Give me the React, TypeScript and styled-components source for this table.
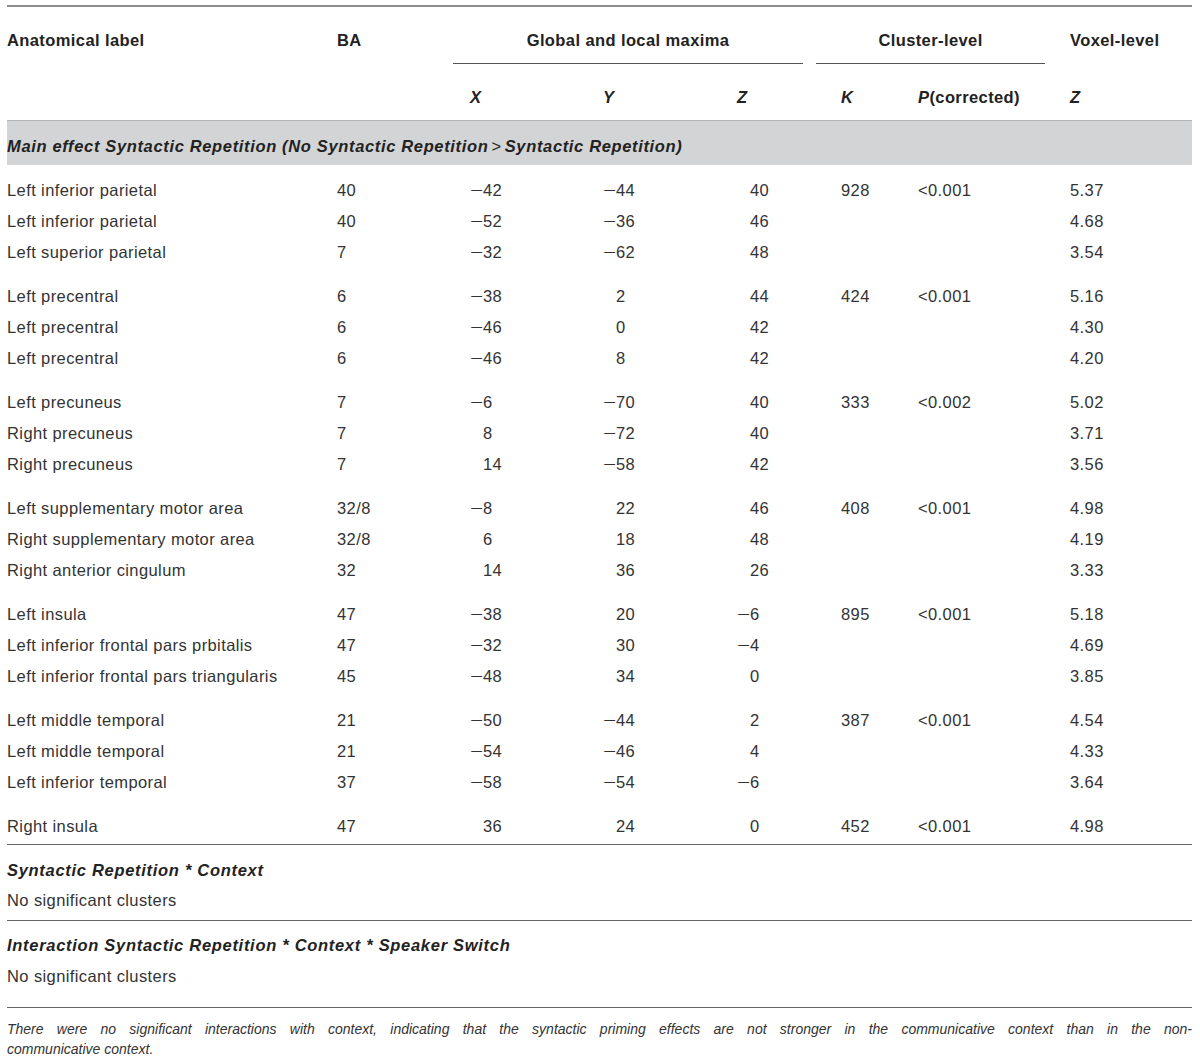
import React from "react";
import styled, { createGlobalStyle } from "styled-components";

const GlobalStyle = createGlobalStyle`
  html, body {
    margin: 0;
    padding: 0;
    background: #ffffff;
  }
  body {
    font-family: "Liberation Sans", Arial, sans-serif;
    color: #333;
  }
`;

const Page = styled.div`
  width: 1185px;
  padding: 5px 8px 0 7px;
  font-size: 16.5px;
  letter-spacing: 0.4px;
`;

const Table = styled.table`
  width: 1185px;
  table-layout: fixed;
  border-collapse: collapse;
  border-top: 2px solid #8c8c8c;
  border-bottom: 1px solid #666;
`;

const HeadCell = styled.th`
  text-align: left;
  vertical-align: top;
  font-weight: 700;
  color: #222;
  line-height: 20px;
  padding: 22.5px 0 0;
`;

const SpanHead = styled.div<{ $left: number; $right: number }>`
  text-align: center;
  border-bottom: 1px solid #555;
  padding-bottom: 13px;
  margin-left: ${(p) => p.$left}px;
  margin-right: ${(p) => p.$right}px;
`;

const SubHeadCell = styled.th`
  text-align: left;
  font-weight: 700;
  font-style: italic;
  color: #222;
  line-height: 20px;
  padding: 23px 0 13.5px;
`;

const Plain = styled.span`
  font-style: normal;
`;

const BandCell = styled.td`
  background: #d3d4d6;
  border-top: 1px solid #b4b4b4;
  font-weight: 700;
  font-style: italic;
  letter-spacing: 0.65px;
  color: #222;
  line-height: 20px;
  padding: 15px 0 9px;
`;

const Gt = styled.span`
  font-weight: 400;
  font-style: normal;
  margin: 0 3px;
`;

const Cell = styled.td<{ $top: number; $bottom: number }>`
  line-height: 20px;
  padding: ${(p) => p.$top}px 0 ${(p) => p.$bottom}px;
  white-space: nowrap;
`;

const Sign = styled.span`
  display: inline-block;
  width: 13px;
`;

const Minus = styled.span`
  display: inline-block;
  transform: scaleX(1.35);
  transform-origin: left center;
`;

const SectionTitle = styled.td`
  border-top: 1px solid #666;
  font-weight: 700;
  font-style: italic;
  letter-spacing: 0.7px;
  color: #222;
  line-height: 20px;
  padding: 14.5px 0 5.5px;
`;

const SectionText = styled.td<{ $bottom: number }>`
  line-height: 20px;
  padding: 5px 0 ${(p) => p.$bottom}px;
`;

const Footnote = styled.div`
  margin: 11.5px 0 0;
  font-size: 14px;
  letter-spacing: 0;
  line-height: 20px;
  font-style: italic;
  color: #333;
`;

const FullLine = styled.span`
  display: block;
  text-align: justify;
  text-align-last: justify;
`;

type Row = [string, string, number, number, number, string, string, string];

const groups: Row[][] = [
  [
    ["Left inferior parietal", "40", -42, -44, 40, "928", "<0.001", "5.37"],
    ["Left inferior parietal", "40", -52, -36, 46, "", "", "4.68"],
    ["Left superior parietal", "7", -32, -62, 48, "", "", "3.54"],
  ],
  [
    ["Left precentral", "6", -38, 2, 44, "424", "<0.001", "5.16"],
    ["Left precentral", "6", -46, 0, 42, "", "", "4.30"],
    ["Left precentral", "6", -46, 8, 42, "", "", "4.20"],
  ],
  [
    ["Left precuneus", "7", -6, -70, 40, "333", "<0.002", "5.02"],
    ["Right precuneus", "7", 8, -72, 40, "", "", "3.71"],
    ["Right precuneus", "7", 14, -58, 42, "", "", "3.56"],
  ],
  [
    ["Left supplementary motor area", "32/8", -8, 22, 46, "408", "<0.001", "4.98"],
    ["Right supplementary motor area", "32/8", 6, 18, 48, "", "", "4.19"],
    ["Right anterior cingulum", "32", 14, 36, 26, "", "", "3.33"],
  ],
  [
    ["Left insula", "47", -38, 20, -6, "895", "<0.001", "5.18"],
    ["Left inferior frontal pars prbitalis", "47", -32, 30, -4, "", "", "4.69"],
    ["Left inferior frontal pars triangularis", "45", -48, 34, 0, "", "", "3.85"],
  ],
  [
    ["Left middle temporal", "21", -50, -44, 2, "387", "<0.001", "4.54"],
    ["Left middle temporal", "21", -54, -46, 4, "", "", "4.33"],
    ["Left inferior temporal", "37", -58, -54, -6, "", "", "3.64"],
  ],
  [["Right insula", "47", 36, 24, 0, "452", "<0.001", "4.98"]],
];

const widths = [330, 133, 133, 134, 104, 77, 152, 122];

function Coord({ v }: { v: number }) {
  return (
    <>
      <Sign>{v < 0 ? <Minus>{"\u2212"}</Minus> : null}</Sign>
      {Math.abs(v)}
    </>
  );
}

export default function App() {
  return (
    <Page>
      <GlobalStyle />
      <Table>
        <colgroup>
          {widths.map((w, i) => (
            <col key={i} style={{ width: w }} />
          ))}
        </colgroup>
        <thead>
          <tr>
            <HeadCell>Anatomical label</HeadCell>
            <HeadCell>BA</HeadCell>
            <HeadCell colSpan={3}>
              <SpanHead $left={-17} $right={38}>Global and local maxima</SpanHead>
            </HeadCell>
            <HeadCell colSpan={2}>
              <SpanHead $left={-25} $right={25}>Cluster-level</SpanHead>
            </HeadCell>
            <HeadCell>Voxel-level</HeadCell>
          </tr>
          <tr>
            <SubHeadCell />
            <SubHeadCell />
            <SubHeadCell>X</SubHeadCell>
            <SubHeadCell>Y</SubHeadCell>
            <SubHeadCell>Z</SubHeadCell>
            <SubHeadCell>K</SubHeadCell>
            <SubHeadCell>
              P<Plain>(corrected)</Plain>
            </SubHeadCell>
            <SubHeadCell>Z</SubHeadCell>
          </tr>
        </thead>
        <tbody>
          <tr>
            <BandCell colSpan={8}>
              Main effect Syntactic Repetition (No Syntactic Repetition
              <Gt>&gt;</Gt>Syntactic Repetition)
            </BandCell>
          </tr>
          {groups.map((g, gi) =>
            g.map((r, ri) => {
              const top = ri > 0 ? 5.5 : gi === 0 ? 15 : 18.5;
              const bottom = gi === groups.length - 1 ? 8 : 5.5;
              return (
                <tr key={`${gi}-${ri}`}>
                  <Cell $top={top} $bottom={bottom}>{r[0]}</Cell>
                  <Cell $top={top} $bottom={bottom}>{r[1]}</Cell>
                  <Cell $top={top} $bottom={bottom}><Coord v={r[2]} /></Cell>
                  <Cell $top={top} $bottom={bottom}><Coord v={r[3]} /></Cell>
                  <Cell $top={top} $bottom={bottom}><Coord v={r[4]} /></Cell>
                  <Cell $top={top} $bottom={bottom}>{r[5]}</Cell>
                  <Cell $top={top} $bottom={bottom}>{r[6]}</Cell>
                  <Cell $top={top} $bottom={bottom}>{r[7]}</Cell>
                </tr>
              );
            })
          )}
          <tr>
            <SectionTitle colSpan={8}>Syntactic Repetition * Context</SectionTitle>
          </tr>
          <tr>
            <SectionText colSpan={8} $bottom={9.5}>No significant clusters</SectionText>
          </tr>
          <tr>
            <SectionTitle colSpan={8}>
              Interaction Syntactic Repetition * Context * Speaker Switch
            </SectionTitle>
          </tr>
          <tr>
            <SectionText colSpan={8} $bottom={21}>No significant clusters</SectionText>
          </tr>
        </tbody>
      </Table>
      <Footnote>
        <FullLine>
          There were no significant interactions with context, indicating that
          the syntactic priming effects are not stronger in the communicative
          context than in the non-
        </FullLine>
        communicative context.
      </Footnote>
    </Page>
  );
}
